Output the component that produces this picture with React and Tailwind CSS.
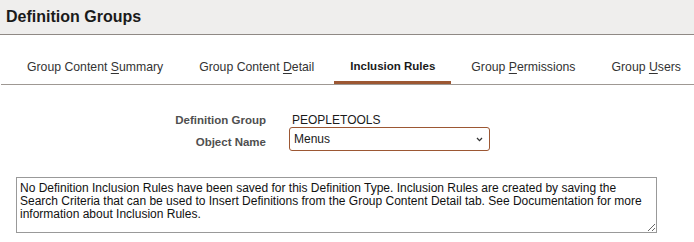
const TABS = [
  { label: 'Group Content ', key: 'S', rest: 'ummary' },
  { label: 'Group Content ', key: 'D', rest: 'etail' },
  { label: 'Inclusion Rules', active: true },
  { label: 'Group ', key: 'P', rest: 'ermissions' },
  { label: 'Group ', key: 'U', rest: 'sers' },
];

const MESSAGE =
  'No Definition Inclusion Rules have been saved for this Definition Type. Inclusion Rules are created by saving the\nSearch Criteria that can be used to Insert Definitions from the Group Content Detail tab. See Documentation for more\ninformation about Inclusion Rules.';

function App() {
  return (
    <div className="h-[242px] w-[694px] overflow-hidden bg-white font-['Liberation_Sans',Arial,sans-serif] text-[12px] text-[#333]">
      <header className="flex h-[35px] items-center border-b border-[#8f8985] bg-[#efeeed] px-[6px]">
        <h1 className="text-[16px] font-bold text-[#1a1a1a]">Definition Groups</h1>
      </header>

      <nav className="mt-[15px] ml-px flex h-[35px] gap-[4px] overflow-hidden border-b border-[#9e9893] pl-[10px]">
        {TABS.map((tab, i) => (
          <div
            key={i}
            className={
              tab.active
                ? 'flex shrink-0 items-center border-b-[3px] border-[#9c5733] px-[16px] pt-[3px] text-[11.5px] font-bold text-[#1a1a1a]'
                : 'flex shrink-0 items-center border-b-[3px] border-transparent px-[16px] pt-[3px] text-[12.25px]'
            }
          >
            <span className="whitespace-pre">
              {tab.label}
              {tab.key ? <span className="underline underline-offset-2">{tab.key}</span> : null}
              {tab.rest}
            </span>
          </div>
        ))}
      </nav>

      <div className="mt-[27px] grid grid-cols-[266px_auto] grid-rows-[15px_24px] items-center gap-x-[23px]">
        <div className="pt-[2px] text-right text-[11.5px] font-bold text-[#4f4f4f]">Definition Group</div>
        <div className="pl-[3px] text-[#1a1a1a]">PEOPLETOOLS</div>
        <div className="pt-[8px] text-right text-[11.5px] font-bold text-[#4f4f4f]">Object Name</div>
        <div className="flex h-[24px] w-[201px] items-center justify-between rounded-[3px] border border-[#9c5733] pl-[4px] pr-[6px] text-[#1a1a1a]">
          <span>Menus</span>
          <svg width="7" height="5" viewBox="0 0 7 5" className="mt-px">
            <path d="M1 1 L3.5 3.6 L6 1" fill="none" stroke="#333" strokeWidth="1.3" />
          </svg>
        </div>
      </div>

      <div className="mt-[26px] pl-[16px]">
        <textarea
          readOnly
          value={MESSAGE}
          className="block h-[56px] w-[641px] resize border border-[#999] px-[3px] pt-[4px] leading-[13px] text-[#111] outline-none"
        />
      </div>
    </div>
  );
}

export default App;
